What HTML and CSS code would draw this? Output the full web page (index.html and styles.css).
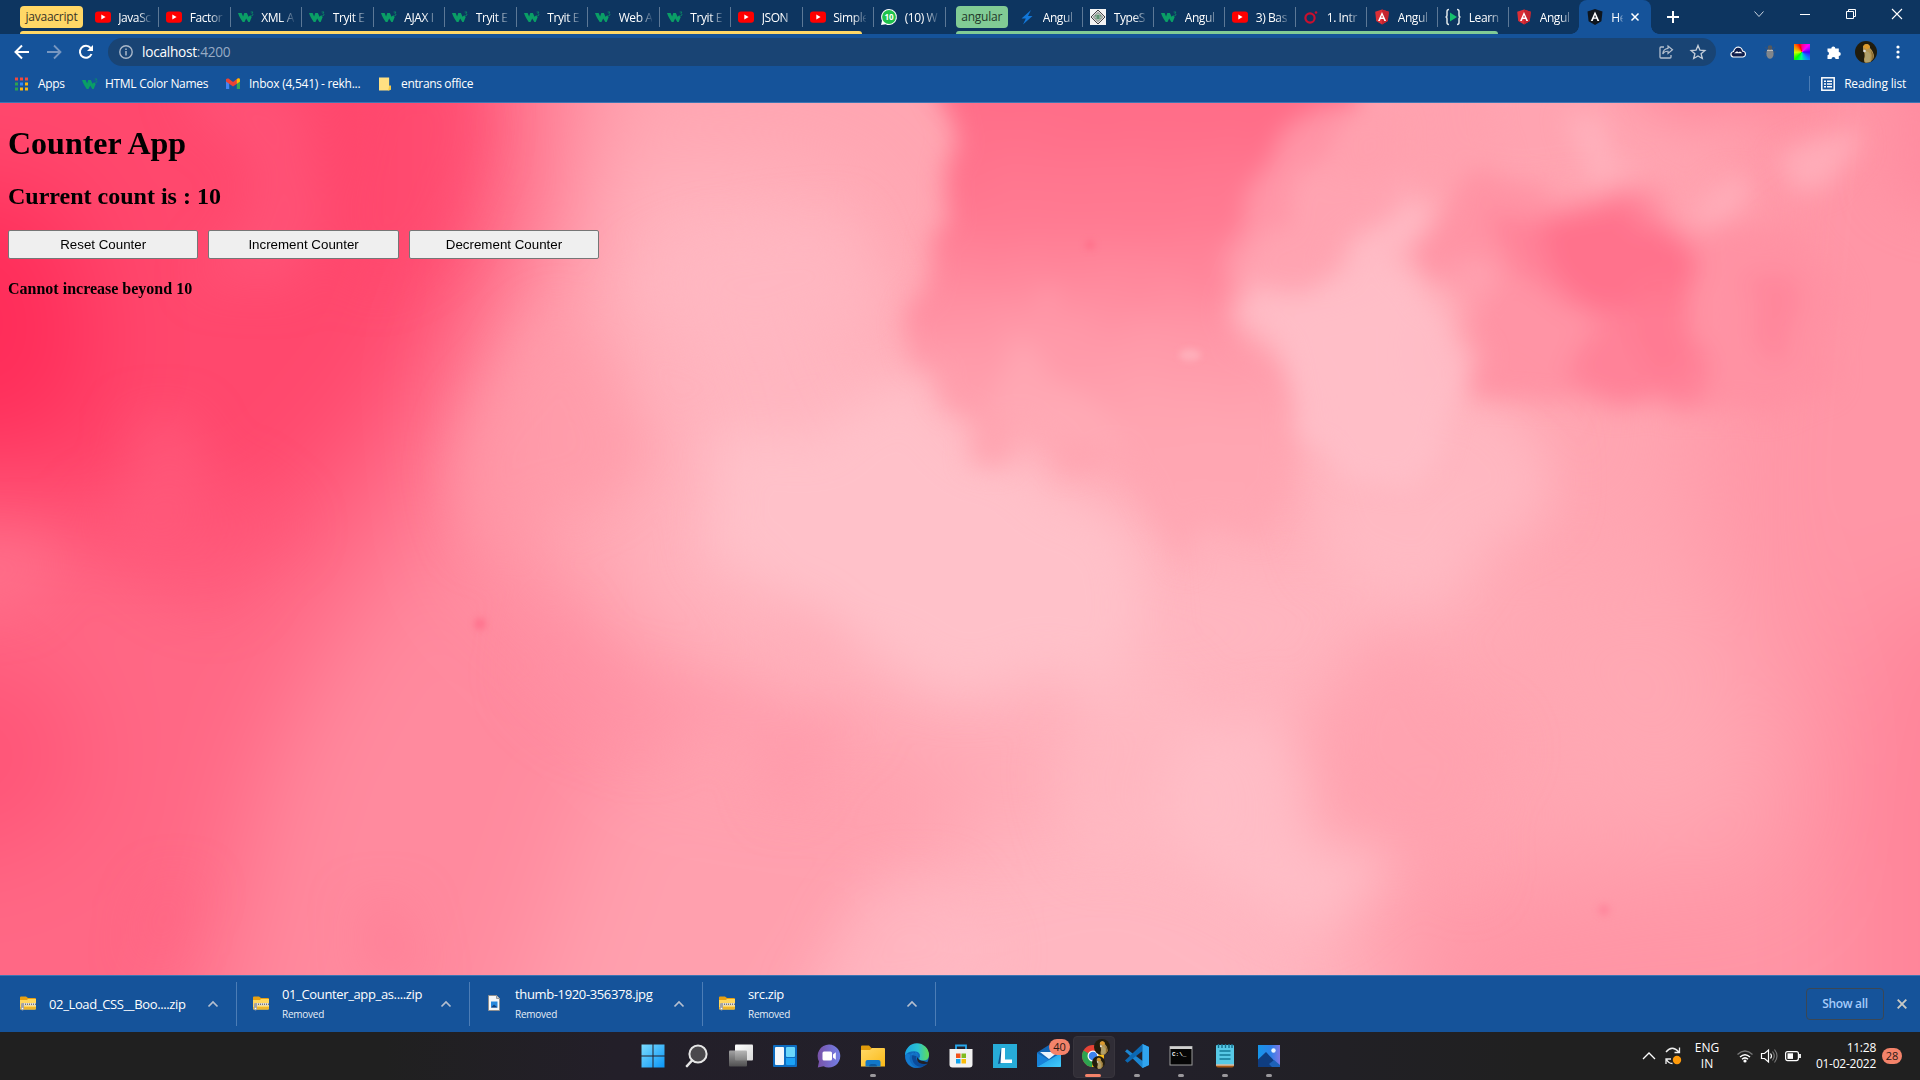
FILE: index.html
```html
<!DOCTYPE html>
<html lang="en">
<head>
<meta charset="utf-8">
<title>HelloWorld</title>
<link rel="stylesheet" href="styles.css">
</head>
<body>
<svg class="defs" width="0" height="0" aria-hidden="true">
  <defs>
    <symbol id="yt" viewBox="0 0 16 16"><rect x="0" y="2.5" width="16" height="11.3" rx="3" fill="#f00"/><path d="M6.3 5.6v5l4.3-2.5z" fill="#fff"/></symbol>
    <symbol id="w3" viewBox="0 0 16 16"><path d="M0 4h3.600l1.500 3.600L6.300 4h2.600l1.600 3.800 1.500-1.300 1.700 1.500-2 5h-1.400L8.200 9.500 6.500 13H4.700C3 10.500 1.200 8 0 4z" fill="#0a9e66"/><path d="M12.600 3h2.400l-1.200 1.500c1.600.2 1.500 2.300-.2 2.300-.6 0-1-.2-1.200-.5" fill="none" stroke="#0a8f66" stroke-width=".8"/></symbol>
    <symbol id="ng" viewBox="0 0 16 16"><path d="M8 .5l6.800 2.300-1 9.200L8 15.500 2.200 12l-1-9.200z" fill="#dd2f36"/><path d="M8 .5l6.800 2.300-1 9.200L8 15.500z" fill="#c4252f"/><path d="M8 3L4 12h1.800l.8-2h2.900l.8 2h1.800zm0 3.200l1 2.400H7z" fill="#fff"/></symbol>
    <symbol id="ngdark" viewBox="0 0 16 16"><path d="M8 0l7.500 2.600-1.100 9.600L8 16l-6.400-3.800L.5 2.600z" fill="#0e151d"/><path d="M8 2.600L3.800 12h1.900l.9-2.200h2.900l.9 2.200h1.900zm0 3.300l1.100 2.500H7z" fill="#fff"/></symbol>
    <symbol id="zip" viewBox="0 0 16 16"><path d="M0 2.500Q0 1.500 1 1.500h5l2 1.500h7q1 0 1 1v4H0z" fill="#e8a010"/><path d="M0 5h7l1-1h8v9.500q0 1-1 1H1q-1 0-1-1z" fill="#ffd75e"/><path d="M0 12h16v1.500q0 1-1 1H1q-1 0-1-1z" fill="#eeb52b"/><rect x="2" y="8" width="14" height="2.600" fill="#ddd"/><path d="M3 9.300h13" stroke="#777" stroke-width="1.500" stroke-dasharray="1 1"/><rect x="1" y="8" width="3" height="7.500" rx="1.400" fill="#a4a4a4"/><circle cx="2.500" cy="13.500" r=".8" fill="#fff"/></symbol>
    <symbol id="caret" viewBox="0 0 12 12"><path d="M1.500 8.500L6 4l4.500 4.500" fill="none" stroke="#b5bfcf" stroke-width="1.700"/></symbol>
    <symbol id="bird" viewBox="0 0 22 22"><circle cx="11" cy="11" r="11" fill="#211c0c"/><path d="M8 5.500Q9 2.500 12 3q3 .5 3 4 4 4 4 9l-3.500 5q-4 1.500-6 .3-1-2.300 0-5.300.5-4-1.500-7z" fill="#b39450"/><path d="M8 6q.8-3 4-3 2.800.5 3 3.500L12 8.500z" fill="#dd9a2c"/><path d="M10 10q4 0 5.500 4l-1 7-4 .3q-1.500-4 0-7z" fill="#b0a06c"/><path d="M15.500 9q3.500 4 3.300 8l-2.300 3q1-6-1-11z" fill="#8a6c33"/><circle cx="9.500" cy="10" r="1.300" fill="#ddd"/></symbol>
    <linearGradient id="gBlue" x2="1" y2="1"><stop stop-color="#7bdcff"/><stop offset="1" stop-color="#0a95f5"/></linearGradient>
    <linearGradient id="gWhite" x2="1" y2="1"><stop stop-color="#fff"/><stop offset="1" stop-color="#d8d8d8"/></linearGradient>
    <linearGradient id="gGrey" x2="0" y2="1"><stop stop-color="#b0b0b0"/><stop offset="1" stop-color="#555"/></linearGradient>
    <linearGradient id="gChat" x2="1" y2="0"><stop stop-color="#7952a8"/><stop offset="1" stop-color="#7381e8"/></linearGradient>
    <linearGradient id="gFold" x2="1" y2="1"><stop stop-color="#ffd968"/><stop offset="1" stop-color="#fbb917"/></linearGradient>
    <linearGradient id="gEdge" x2="1" y2="0"><stop stop-color="#1aa4e4"/><stop offset=".55" stop-color="#2bc3d2"/><stop offset="1" stop-color="#62dd51"/></linearGradient>
    <linearGradient id="gMail" x2="1" y2="1"><stop stop-color="#168be0"/><stop offset="1" stop-color="#43cdfb"/></linearGradient>
    <linearGradient id="gPhoto" x2="1" y2="0"><stop stop-color="#1595e9"/><stop offset=".6" stop-color="#2f80e8"/><stop offset="1" stop-color="#8078e4"/></linearGradient>
  </defs>
</svg>

<header class="tabstrip">
  <div class="group group-yellow">
    <div class="chip">javaacript</div>
    <div class="tab"><svg><use href="#yt"/></svg><span>JavaSc</span></div>
    <div class="tab"><svg><use href="#yt"/></svg><span>Factor</span></div>
    <div class="tab"><svg><use href="#w3"/></svg><span>XML A</span></div>
    <div class="tab"><svg><use href="#w3"/></svg><span>Tryit E</span></div>
    <div class="tab"><svg><use href="#w3"/></svg><span>AJAX I</span></div>
    <div class="tab"><svg><use href="#w3"/></svg><span>Tryit E</span></div>
    <div class="tab"><svg><use href="#w3"/></svg><span>Tryit E</span></div>
    <div class="tab"><svg><use href="#w3"/></svg><span>Web A</span></div>
    <div class="tab"><svg><use href="#w3"/></svg><span>Tryit E</span></div>
    <div class="tab"><svg><use href="#yt"/></svg><span>JSON</span></div>
    <div class="tab last"><svg><use href="#yt"/></svg><span>Simple</span></div>
  </div>
  <div class="tab"><svg viewBox="0 0 16 16"><path d="M8 0a8 8 0 1 1-3.500 15.200L0 16l1-4.300A8 8 0 0 1 8 0z" fill="#fff"/><circle cx="8" cy="8" r="6.900" fill="#1fc24c"/><text x="8" y="11.200" text-anchor="middle" class="wa-count">10</text></svg><span>(10) W</span></div>
  <div class="group group-green">
    <div class="chip">angular</div>
    <div class="tab"><svg viewBox="0 0 16 16"><path d="M12 1L2.500 9.500h4.300L4 15.500 13.500 7H9z" fill="#1277d8"/></svg><span>Angul</span></div>
    <div class="tab"><svg viewBox="0 0 16 16"><rect width="16" height="16" fill="#f4f4f4"/><path d="M8 1l7 7-7 7-7-7z" fill="#ddd" stroke="#444" stroke-width="1"/><path d="M8 3.500L12.500 8 8 12.500 3.500 8z" fill="#cfe0d2" stroke="#777"/><path d="M5 7h6M5.500 9h5M8 5.500v5" stroke="#3c7a55"/></svg><span>TypeS</span></div>
    <div class="tab"><svg><use href="#w3"/></svg><span>Angul</span></div>
    <div class="tab"><svg><use href="#yt"/></svg><span>3) Bas</span></div>
    <div class="tab"><svg viewBox="0 0 16 16"><circle cx="7" cy="9" r="4.600" fill="none" stroke="#c8102e" stroke-width="2.200"/><circle cx="13" cy="3.500" r="1.300" fill="#c8102e"/></svg><span>1. Intr</span></div>
    <div class="tab"><svg><use href="#ng"/></svg><span>Angul</span></div>
    <div class="tab last"><svg viewBox="0 0 16 16"><path d="M4 .5Q2 .5 2 2.500v3.500Q2 8 .5 8 2 8 2 10v3.500q0 2 2 2M12 .5q2 0 2 2v3.500q0 2 1.500 2-1.500 0-1.500 2v3.500q0 2-2 2" fill="none" stroke="#dfe7ea" stroke-width="1.500"/><path d="M5 3.500v9L12 8z" fill="#14bf6d"/></svg><span>Learn</span></div>
  </div>
  <div class="tab plain"><svg><use href="#ng"/></svg><span>Angul</span></div>
  <div class="tab active"><svg><use href="#ngdark"/></svg><span>He</span><svg class="tab-x" viewBox="0 0 8 8"><path d="M.5.5l7 7M7.500.5l-7 7" stroke="#fff" stroke-width="1.500"/></svg></div>
  <svg class="plus" viewBox="0 0 12 12"><path d="M6 0v12M0 6h12" stroke="#fff" stroke-width="2"/></svg>
  <div class="winctl">
    <svg viewBox="0 0 12 12"><path d="M1.500 3.500L6 8.500l4.500-5" fill="none" stroke="#cbd5e0"/></svg>
    <svg viewBox="0 0 12 12"><path d="M1 6.500h10" stroke="#fff"/></svg>
    <svg viewBox="0 0 12 12"><path d="M1.500 3.500h7v7h-7zM3.500 3.500v-2h7v7h-2" fill="none" stroke="#fff"/></svg>
    <svg viewBox="0 0 12 12"><path d="M1 1l10 10M11 1L1 11" stroke="#fff" stroke-width="1.100"/></svg>
  </div>
</header>

<nav class="toolbar">
  <svg class="nav" viewBox="0 0 16 16"><path d="M15 8H2M8 1.500L1.500 8 8 14.500" fill="none" stroke="#fff" stroke-width="2"/></svg>
  <svg class="nav" viewBox="0 0 16 16"><path d="M1 8h13M8 1.500L14.500 8 8 14.500" fill="none" stroke="#7897c0" stroke-width="1.800"/></svg>
  <svg class="nav" viewBox="0 0 16 16"><path d="M13.500 10A6 6 0 1 1 12.600 4" fill="none" stroke="#fff" stroke-width="2"/><path d="M15 1v6H9z" fill="#fff"/></svg>
  <div class="omnibox">
    <svg class="info" viewBox="0 0 14 14"><circle cx="7" cy="7" r="6.200" fill="none" stroke="#aab8c9" stroke-width="1.400"/><path d="M7 6v4.500M7 3.500v1.400" stroke="#aab8c9" stroke-width="1.500"/></svg>
    <span class="url">localhost<span class="port">:4200</span></span>
    <svg class="share" viewBox="0 0 14 14"><path d="M5 2H2Q1 2 1 3v9q0 1 1 1h9q1 0 1-1v-2" fill="none" stroke="#b3bfce" stroke-width="1.300"/><path d="M9 1l4.500 3.700L9 8.500V6.300Q5.500 6 3.800 9 4 4 9 3.300z" fill="none" stroke="#b3bfce" stroke-width="1.200"/></svg>
    <svg class="star" viewBox="0 0 16 16"><path d="M8 1.500l1.900 4.600 5 .4-3.800 3.200 1.200 4.800L8 11.900l-4.300 2.600 1.200-4.800L1.100 6.500l5-.4z" fill="none" stroke="#c5ced9" stroke-width="1.300"/></svg>
  </div>
  <div class="exts">
    <svg viewBox="0 0 16 16"><path d="M3 13q-2.500-1-2-3.500Q1.500 8 3.500 7.500 5 3 8.500 3q3.500.5 4 4 3 .5 3 3T13 13z" fill="#0d1c4c" stroke="#fff" stroke-width="1.100"/><path d="M4 9.300l3-2 1.500 1L10 7.500l2.500 1.800z" fill="#fff"/></svg>
    <svg viewBox="0 0 16 16"><path d="M3 3l3 3M13 3l-3 3M2 8h12M3 13l3-3M13 13l-3-3" stroke="#35527b"/><ellipse cx="8" cy="9.500" rx="3.600" ry="5.300" fill="#81868b"/><circle cx="8" cy="3.500" r="2.300" fill="#55595e"/><path d="M5 6.500h6" stroke="#bbb"/></svg>
    <i class="rainbow"></i>
    <svg viewBox="0 0 16 16"><path d="M1.500 4.500h3.800a2 2 0 1 1 4 0h3.500v3.600a2 2 0 1 1 0 4V15H9.500a2 2 0 0 0-4 0h-4v-3.700a1.900 1.900 0 0 0 0-3.700z" fill="#fff"/></svg>
    <svg class="avatar"><use href="#bird"/></svg>
    <svg viewBox="0 0 16 16"><circle cx="8" cy="3" r="1.600" fill="#fff"/><circle cx="8" cy="8" r="1.600" fill="#fff"/><circle cx="8" cy="13" r="1.600" fill="#fff"/></svg>
  </div>
</nav>

<nav class="bookmarks">
  <svg class="apps" viewBox="0 0 13 14"><path d="M0 2h3M5 2h3M10 2h3" stroke="#f04a3e" stroke-width="3"/><path d="M0 7h3" stroke="#2ea24f" stroke-width="3"/><path d="M5 7h3" stroke="#3387f5" stroke-width="3"/><path d="M10 7h3M5 12h3M10 12h3" stroke="#fbb80f" stroke-width="3"/><path d="M0 12h3" stroke="#2ea24f" stroke-width="3"/></svg><span class="bm b1">Apps</span>
  <svg><use href="#w3"/></svg><span class="bm b2">HTML Color Names</span>
  <svg class="gmail" viewBox="0 0 14 11"><path d="M0 1.500V11h3.200V4.500z" fill="#4285f4"/><path d="M14 1.500V11h-3.200V4.500z" fill="#34a853"/><path d="M0 1.300Q1 0 2.500.6L7 4l4.500-3.400Q13 0 14 1.300v2.200L7 8.500 0 3.500z" fill="#ea4335"/><path d="M10.800 1.200Q13.500-.8 14 1.800v1.700l-3.200 2.300z" fill="#fbbc04"/></svg><span class="bm b3">Inbox (4,541) - rekh...</span>
  <svg class="folder" viewBox="0 0 13 14"><path d="M0 0h11v9h2v4h-2v1H0z" fill="#ffe082"/><path d="M11 9l-1 5h1l2-1V9z" fill="#f6c945"/></svg><span class="bm b4">entrans office</span>
  <div class="reading"><svg viewBox="0 0 14 14"><rect x=".8" y=".8" width="12.400" height="12.400" fill="none" stroke="#fff" stroke-width="1.500"/><path d="M3 4.200h2M3 7h2M3 9.800h2M6 4.200h5M6 7h5M6 9.800h5" stroke="#fff" stroke-width="1.500"/></svg><span class="bm">Reading list</span></div>
</nav>

<main class="page">
  <svg class="sky" viewBox="0 0 1920 872" preserveAspectRatio="none" aria-hidden="true">
    <defs>
      <filter id="haze" x="-30%" y="-30%" width="160%" height="160%" color-interpolation-filters="sRGB"><feGaussianBlur stdDeviation="52"/></filter>
      <filter id="soft" filterUnits="userSpaceOnUse" x="-100" y="-100" width="2120" height="1072" color-interpolation-filters="sRGB"><feTurbulence type="fractalNoise" baseFrequency=".009" numOctaves="3" seed="4"/><feDisplacementMap in="SourceGraphic" scale="90" xChannelSelector="R" yChannelSelector="G"/><feGaussianBlur stdDeviation="24"/></filter>
      <filter id="wisp" filterUnits="userSpaceOnUse" x="-100" y="-100" width="2120" height="1072" color-interpolation-filters="sRGB"><feTurbulence type="fractalNoise" baseFrequency=".016" numOctaves="3" seed="9"/><feDisplacementMap in="SourceGraphic" scale="46" xChannelSelector="R" yChannelSelector="G"/><feGaussianBlur stdDeviation="12"/></filter>
      <filter id="spot" x="-50%" y="-50%" width="200%" height="200%" color-interpolation-filters="sRGB"><feGaussianBlur stdDeviation="3"/></filter>
      <linearGradient id="topcloud" gradientUnits="userSpaceOnUse" x1="0" y1="0" x2="0" y2="430"><stop stop-color="#ff6d88"/><stop offset=".3" stop-color="#ff7c93"/><stop offset=".55" stop-color="#ff98a8"/><stop offset=".75" stop-color="#ffa5b1"/><stop offset="1" stop-color="#ffa8b4"/></linearGradient>
    </defs>
    <rect width="1920" height="872" fill="#ffa6b2"/>
    <g filter="url(#haze)">
      <path d="M-160-160H600L570 130 480 260 500 440 700 640 900 700 940 1030H-160z" fill="#ff8a9e"/>
      <path d="M-160-160H540V120L480 260 430 400 330 540 270 660 180 1030H-160z" fill="#ff6885"/>
      <path d="M-160-160H460V120L430 240 350 350 260 440 120 440-160 380z" fill="#ff486d"/>
      <path d="M-160 90H60L100 260 60 340-160 350z" fill="#ff2c59"/>
      <path d="M-160 560H50L90 680 20 750-160 750z" fill="#ff5477"/>
      <path d="M620 620L960 670 960 750 800 1030H480z" fill="#ffa0ae"/>
      <path d="M600 60L850 80 900 250 960 330 1130 400 1300 440 1480 380 1500 480 1260 640 1130 640 1000 640 740 560 600 470 680 370 620 230z" fill="#ffb6c0"/>
      <path d="M1750-160H2080V1030H1700L1780 650 1700 400z" fill="#ff96a6"/>
      <path d="M1880 500H2080V1030H1800z" fill="#ff8499"/>
      <path d="M1450 500L1700 450 1760 650 1650 760 1560 650z" fill="#ffa8b3"/>
      <path d="M900 800L1020 700 1180 700 1350 800 1340 1030H760z" fill="#ffb7c1"/>
      <path d="M1400 800L1620 770 1850 760 1850 1030H1440z" fill="#ff95a5"/>
    </g>
    <g filter="url(#soft)">
      <path d="M180-40L280-40 320 100 280 190 200 170 240 110z" fill="#ff6284" opacity=".4"/>
      <path d="M130 300L180 290 200 370 150 440z" fill="#ff6a88" opacity=".4"/>
      <path d="M90 400L230 370 300 440 240 500 130 480z" fill="#ff5577" opacity=".4"/>
      <path d="M380-40L480-40 460 120 400 200 330 140z" fill="#ff486d" opacity=".5"/>
      <path d="M-60 420L30 420 50 500-60 540z" fill="#ff7d94" opacity=".35"/>
      <path d="M500 220L560 210 600 250 640 340 580 400 490 440 470 350z" fill="#ff97a7" opacity=".6"/>
      <path d="M650 130L850 120 890 160 870 220 760 250 650 210z" fill="#ffb8c1" opacity=".6"/>
      <path d="M720 350L900 290 980 350 1120 400 1160 500 1100 600 950 580 820 530 720 450z" fill="#ffc2ca" opacity=".9"/>
      <path d="M1090 540L1180 560 1200 640 1240 720 1200 780 1090 740 1050 660z" fill="#ffbcc5" opacity=".6"/>
      <path d="M1170 610L1280 580 1290 680 1330 740 1370 800 1320 820 1200 780 1150 700z" fill="#ffc0c9" opacity=".8"/>
      <path d="M1250 210L1330 200 1390 120 1430 140 1440 220 1470 300 1560 350 1500 440 1400 500 1310 450 1300 300z" fill="#ffbdc6" opacity=".7"/>
      <path d="M1360 540L1440 560 1500 650 1480 770 1400 760 1330 690 1330 610z" fill="#ffa0ad" opacity=".5"/>
      <path d="M500 500L620 560 750 610 860 620 800 680 560 620z" fill="#ff92a4" opacity=".4"/>
      <path d="M760 480L860 540 820 570 750 510z" fill="#ffaab6" opacity=".6"/>
      <path d="M880 770L940 760 1000 840 980 920H800z" fill="#ffbcc5" opacity=".5"/>
      <path d="M1400-60H1800L1760 60 1690 110 1400 80z" fill="#ffa4b0" opacity=".7"/>
      <path d="M1620-60L1840-60 1780 30 1680 40z" fill="#ff8499" opacity=".8"/>
      <path d="M1900-60H1980V90H1890z" fill="#ff8ca0"/>
      <path d="M340 800L400 790 370 820 420 870H340z" fill="#ff708b" opacity=".4"/>
      <path d="M150 790L200 780 180 840 130 850z" fill="#ff5f7f" opacity=".4"/>
    </g>
    <g filter="url(#wisp)">
      <path d="M938-60H1380L1320 50 1290 120 1220 185 1240 240 1280 270 1297 340 1285 380 1265 430 1220 425 1195 420 1185 460 1155 440 1145 380 1115 345 1090 375 1060 370 1035 340 1010 310 995 365 980 365 975 305 945 290 925 260 912 215 935 150 950 95z" fill="url(#topcloud)"/>
      <path d="M1240 110L1290 10 1400 10 1400 90 1340 160 1310 192 1265 188 1222 200 1220 150z" fill="#ffa3b0" opacity=".7"/>
      <path d="M1360-60L1470-60 1510 80 1440 90 1400 70 1330 80z" fill="#ffa0ad" opacity=".6"/>
      <path d="M1405 133L1455 118 1475 60 1530 90 1590 90 1650 90 1680 130 1720 110 1780 130 1830 150 1850 190 1830 290 1780 310 1690 305 1650 305 1580 295 1530 290 1490 290 1472 275 1490 240 1460 195 1425 160z" fill="#ff90a2" opacity=".85"/>
      <path d="M1490 110L1530 130 1560 110 1610 95 1670 120 1700 165 1680 210 1710 260 1705 298 1640 295 1560 270 1600 220 1540 190 1510 160z" fill="#ff7e95" opacity=".8"/>
      <path d="M1530 130L1590 108 1660 125 1690 160 1680 205 1610 205 1550 175z" fill="#ff6e8a" opacity=".85"/>
      <path d="M1640 180L1690 180 1695 250 1670 290 1630 240z" fill="#ff7990" opacity=".7"/>
      <path d="M1750 175L1790 165 1800 210 1780 260 1755 240z" fill="#ff7f96" opacity=".6"/>
      <path d="M1690 125L1720 60 1745 75 1730 110 1705 130zM1770 75L1810 40 1860 15 1870 50 1800 95z" fill="#ffacb8"/>
      <path d="M1560 20L1600 10 1630 70 1600 80z" fill="#ffb4bf" opacity=".75"/>
      <path d="M1485 200L1495 170 1475 155 1445 150 1465 190 1485 225z" fill="#ffa8b4" opacity=".8"/>
      <path d="M1045 190L1060 180 1050 215 1035 225zM1000 310L1010 240 1060 270 1110 300 1130 350 1080 340 1050 350z" fill="#ffafba" opacity=".5"/>
      <path d="M1228 215L1255 185 1305 190 1350 165 1385 110 1400 165 1430 200 1475 245 1465 300 1420 380 1340 380 1300 330 1285 250z" fill="#ffc0c9" opacity=".75"/>
      <path d="M1375 130L1390 90 1425 105 1445 100 1410 125 1400 150z" fill="#ffb9c3"/>
    </g>
    <g filter="url(#spot)">
      <circle cx="480" cy="521" r="6" fill="#ff6d8a" opacity=".8"/>
      <circle cx="1090" cy="142" r="5" fill="#ff6883" opacity=".6"/>
      <circle cx="1604" cy="807" r="6" fill="#ff859b" opacity=".8"/>
      <ellipse cx="1190" cy="252" rx="11" ry="6" fill="#ffb4be" opacity=".8"/>
    </g>
  </svg>
  <div class="content">
    <h1>Counter App</h1>
    <h2>Current count is : 10</h2>
    <div class="buttons">
      <button>Reset Counter</button>
      <button>Increment Counter</button>
      <button>Decrement Counter</button>
    </div>
    <h4>Cannot increase beyond 10</h4>
  </div>
</main>

<section class="downloads">
  <div class="dl"><svg class="ficon"><use href="#zip"/></svg><div class="name"><p>02_Load_CSS__Boo....zip</p></div><svg class="car"><use href="#caret"/></svg></div>
  <div class="dl"><svg class="ficon"><use href="#zip"/></svg><div class="name"><p>01_Counter_app_as....zip</p><small>Removed</small></div><svg class="car"><use href="#caret"/></svg></div>
  <div class="dl"><svg class="ficon" viewBox="0 0 16 16"><path d="M2.500.5h8l3 3v12h-11z" fill="#f6f6f6" stroke="#8f8f8f"/><path d="M10.500.5v3h3" fill="#ccc" stroke="#999"/><rect x="5" y="6.500" width="6.500" height="6" fill="#2788dd"/><path d="M5 12.500l3-3 3.500 3z" fill="#123f7c"/></svg><div class="name"><p>thumb-1920-356378.jpg</p><small>Removed</small></div><svg class="car"><use href="#caret"/></svg></div>
  <div class="dl"><svg class="ficon"><use href="#zip"/></svg><div class="name"><p>src.zip</p><small>Removed</small></div><svg class="car"><use href="#caret"/></svg></div>
  <div class="showall">Show all</div>
  <svg class="dlx" viewBox="0 0 10 10"><path d="M.7.7l8.600 8.600M9.300.7L.7 9.300" stroke="#c9c9c4" stroke-width="1.900"/></svg>
</section>

<footer class="taskbar">
  <div class="apps-row">
    <div class="app"><svg viewBox="0 0 24 24"><path d="M.5.5h11v11H.5zM12.500.5h11v11h-11zM.5 12.500h11v11H.5zM12.500 12.500h11v11h-11z" fill="url(#gBlue)"/></svg></div>
    <div class="app"><svg viewBox="0 0 24 24"><circle cx="13" cy="10" r="8.600" fill="#4a484c" stroke="#e6e6e6" stroke-width="2"/><path d="M7 16.500L2 22" stroke="#e6e6e6" stroke-width="2.600" stroke-linecap="round"/></svg></div>
    <div class="app"><svg viewBox="0 0 24 24"><rect x="6" y=".5" width="18" height="16" rx="1" fill="url(#gWhite)"/><rect x="0" y="6.500" width="18" height="16" rx="1" fill="url(#gGrey)" opacity=".9"/></svg></div>
    <div class="app"><svg viewBox="0 0 24 24"><rect y="1" width="24" height="22" rx="1" fill="#0d6cc0"/><rect x="2" y="3" width="9" height="18" rx="1" fill="#f3f7fb"/><rect x="13" y="3" width="9" height="10" rx="1" fill="#6ad7fb"/><path d="M13 14h9v6q0 1-1 1h-7q-1 0-1-1z" fill="#1ba2f5"/></svg></div>
    <div class="app"><svg viewBox="0 0 24 24"><path d="M12 .5A11.500 11.500 0 1 1 6.500 22.200L.8 23.500 2 17.500A11.500 11.500 0 0 1 12 .5z" fill="url(#gChat)"/><rect x="5.500" y="7.500" width="9.500" height="9" rx="1.500" fill="#fff"/><path d="M16 10.500l2.800-2.200v7.400L16 13.500z" fill="#fff"/></svg></div>
    <div class="app run"><svg viewBox="0 0 24 24"><path d="M0 2.500Q0 1.500 1 1.500h7l3 3h5v5H0z" fill="#e19b0b"/><path d="M0 6h9l2-2h12q1 0 1 1v17.500H0z" fill="url(#gFold)"/><path d="M4.500 22.500V18q0-2 2-2h11q2 0 2 2v4.500z" fill="#1178c9"/><path d="M8 22.500q0-2.500 2-2.500h4q2 0 2 2.500z" fill="#0c5a9e"/></svg></div>
    <div class="app"><svg viewBox="0 0 24 24"><circle cx="12" cy="12" r="12" fill="#1169bd"/><path d="M0 11.500A12 12 0 0 1 24 11q0 5.500-6 5.500-4 0-4-2.500 1.500-1 .8-3.500Q13.500 7.300 9 7.300 3 7.300 0 11.500z" fill="url(#gEdge)"/><path d="M9.500 8Q5 12 8.500 18.500q4 5.500 9.500 4Q24 20 22 18q-4.500 2-8.500 0-4-3-1.500-7z" fill="#0b4a98"/><path d="M12.500 12.500q1-3.500-2-4.300Q3 9 5 17q2 5 7 7Q4 24 1 16.500-.5 12 1.500 9.500" fill="#1581d6" opacity=".7"/><path d="M24 19q-5 2-9.500 0-3.500-2.500-2-6 1 4 6 4z" fill="#232026"/></svg></div>
    <div class="app"><svg viewBox="0 0 24 24"><path d="M7 6V1.500h10V6" fill="none" stroke="#27a8ec" stroke-width="1.800"/><path d="M.5 5h23v15.500q0 3-3 3h-17q-3 0-3-3z" fill="#f1f1f1"/><path d="M7 9.500h4.500V14H7z" fill="#f1511b"/><path d="M12.500 9.500H17V14h-4.500z" fill="#80bb20"/><path d="M7 15h4.500v4.500H7z" fill="#10a3ed"/><path d="M12.500 15H17v4.500h-4.500z" fill="#fbbc09"/></svg></div>
    <div class="app"><svg viewBox="0 0 24 24"><rect width="24" height="24" fill="#27acd8"/><path d="M8.500 4v15L5 20 8 4z" fill="#10508a"/><path d="M8.500 4h3.500v11.500h7V19H7.500z" fill="#fff"/></svg></div>
    <div class="app"><svg viewBox="0 0 24 24"><path d="M0 8.500L12 1l12 7.500V22q0 1-1 1H1q-1 0-1-1z" fill="#1265b4"/><path d="M3 8h18L12 15z" fill="#eaf4fc"/><path d="M0 9l12 7L0 23z" fill="#1782d8"/><path d="M24 9v13q0 1-1 1H0z" fill="url(#gMail)"/></svg><span class="badge">40</span></div>
    <div class="app run current"><svg viewBox="0 0 24 24"><circle cx="12" cy="12" r="11" fill="#e74335"/><path d="M12 12L2.500 6.500A11 11 0 0 0 11 23l5-8z" fill="#2da450"/><path d="M12 12l10.100-4.300A11 11 0 0 1 11 23z" fill="#fbc116"/><circle cx="12" cy="12" r="5.500" fill="#fff"/><circle cx="12" cy="12" r="4.300" fill="#3d82ee"/></svg><svg class="face big" viewBox="0 0 22 22"><use href="#bird" width="22" height="22"/></svg><svg class="face small" viewBox="0 0 22 22"><use href="#bird" width="22" height="22"/></svg></div>
    <div class="app run"><svg viewBox="0 0 24 24"><path d="M17.500 0L24 3v18l-6.500 3L2 9l-2-1.500 2-2.200L17.500 17z" fill="#1c86d1"/><path d="M0 16.500L17.500 0v7L2.500 18.700z" fill="#0b68b3"/><path d="M17.500 0L24 3v18l-6.500 3z" fill="#30a5f0"/></svg></div>
    <div class="app run"><svg viewBox="0 0 24 24"><rect x="1" y="2.500" width="22" height="18.500" fill="#050505" stroke="#9b9b9b"/><rect x="1" y="2.500" width="22" height="2.500" fill="#d0d0d0"/><text x="3" y="11.500" class="cmd-text">C:\_</text></svg></div>
    <div class="app run"><svg viewBox="0 0 24 24"><rect x="3" y="1" width="18" height="21" rx="1" fill="#57c9e6"/><path d="M5.500 0v4M9 0v4M12.500 0v4M16 0v4M19 0v4" stroke="#14708e" stroke-width="1.400"/><path d="M6.500 7h11M6.500 11h11M6.500 15h11" stroke="#137a98" stroke-width="1.500"/><path d="M3 20.500h18v1q0 2-2 2H5q-2 0-2-2z" fill="#a95813"/><path d="M3 20.500h18v1H3z" fill="#eee"/></svg></div>
    <div class="app run"><svg viewBox="0 0 24 24"><rect x="1" y="1" width="22" height="22" fill="url(#gPhoto)"/><path d="M1 15.500L9 8l14 15H1z" fill="#0f3d80"/><path d="M12 20l5-4 6 5v2h-8z" fill="#1d62b8"/><circle cx="16.500" cy="6.500" r="2.200" fill="#e9f5fd"/></svg></div>
  </div>
  <div class="tray">
    <svg class="ti" viewBox="0 0 24 24"><path d="M6 15l6-6 6 6" fill="none" stroke="#fff" stroke-width="1.300"/></svg>
    <svg class="ti" viewBox="0 0 24 24"><path d="M5 8Q11 .5 18 8M18.500 3.500v5h-5M5 20v-5h5M5.500 15.500q2 4 6 4" fill="none" stroke="#eee" stroke-width="1.300"/><circle cx="16" cy="16" r="4.200" fill="#ff9a0a"/></svg>
    <div class="lang">ENG<br>IN</div>
    <svg class="ti" viewBox="0 0 24 24"><path d="M4.500 10.500q7.500-7 15 0" fill="none" stroke="#777" stroke-width="1.400"/><path d="M7 13q5-4.600 10 0M9 15.300q3-2.800 6 0" fill="none" stroke="#fff" stroke-width="1.500"/><circle cx="12" cy="17" r="1.600" fill="#fff"/></svg>
    <svg class="ti" viewBox="0 0 24 24"><path d="M4.500 9.500h3l4-3.500v12l-4-3.500h-3z" fill="none" stroke="#fff" stroke-width="1.200"/><path d="M13.500 9.500q2 2.500 0 5" fill="none" stroke="#fff" stroke-width="1.200"/><path d="M15.500 7.500q3.500 4.500 0 9M17.500 5.500q5 6.500 0 13" fill="none" stroke="#777" stroke-width="1.200"/></svg>
    <svg class="ti" viewBox="0 0 24 24"><rect x="4.600" y="7.600" width="12.800" height="9" rx="2" fill="none" stroke="#fff" stroke-width="1.200"/><rect x="6.500" y="9.300" width="5.500" height="5.600" fill="#fff"/><path d="M19 10v4" stroke="#fff" stroke-width="1.800"/></svg>
    <div class="clock">11:28<br>01-02-2022</div>
    <div class="notif">28</div>
  </div>
</footer>
</body>
</html>
```
FILE: styles.css
```css
* { box-sizing: border-box; }
body {
  margin: 0;
  width: 1920px;
  height: 1080px;
  overflow: hidden;
  display: flex;
  flex-direction: column;
  font-family: "Open Sans", "Noto Sans", sans-serif;
  font-size: 12px;
  color: #fff;
}
svg { display: block; flex: none; overflow: visible; }
.defs { position: absolute; }

/* Tab strip */
.tabstrip { height: 34px; flex: none; background: #0d3560; display: flex; padding-left: 20px; }
.group { display: flex; position: relative; height: 34px; }
.group::after {
  content: ""; position: absolute; left: 0; right: 12px; bottom: 0; height: 3px;
  border-radius: 3px 3px 0 0; background: #ffd766;
}
.group-green::after { background: #81cb95; }
.chip {
  width: 63px; height: 22px; margin: 6px 4.700px 0 0; border-radius: 4px;
  background: #ffd766; color: #3a3426; text-align: center; line-height: 21px;
  letter-spacing: -.25px;
}
.group-green { margin-left: 10px; }
.group-green::after { right: 11px; }
.group-green .chip { width: 52px; background: #81cb95; color: #22382a; margin-right: 4.500px; }
.tab {
  width: 71.500px; height: 20px; margin-top: 7px; padding-left: 7px;
  border-right: 1px solid #5c7896; display: flex; align-items: center; gap: 7.500px;
}
.group-green .tab { width: 71px; }
.tab.plain { width: 70px; }
.tab svg { width: 16px; height: 16px; }
.tab span {
  width: 33px; overflow: hidden; white-space: nowrap; line-height: 19px; letter-spacing: -.4px;
  -webkit-mask-image: linear-gradient(90deg, #000 60%, transparent 105%);
  mask-image: linear-gradient(90deg, #000 60%, transparent 105%);
}
.wa-count { font: bold 8px "Open Sans", sans-serif; fill: #fff; }
.tab.plain { border-right: 0; }
.tab.active {
  position: relative; width: 72px; height: 34px; margin-top: 0; border: 0;
  border-radius: 8px 8px 0 0; background: #15539a; padding: 0 0 6px 8px; gap: 8px;
}
.tab.active::before, .tab.active::after {
  content: ""; position: absolute; bottom: 0; width: 8px; height: 8px;
}
.tab.active::before { left: -8px; background: radial-gradient(circle at 0 0, transparent 7.500px, #15539a 8px); }
.tab.active::after { right: -8px; background: radial-gradient(circle at 100% 0, transparent 7.500px, #15539a 8px); }
.tab.active span { width: 12px; }
.tab.active > svg, .tab.active > span { position: relative; top: 3px; }
.tab .tab-x { width: 8px; height: 8px; }
.plus { width: 12px; height: 12px; margin: 11px 0 0 16px; }
.winctl { margin: 8px 17px 0 auto; display: flex; gap: 34px; }
.winctl svg { width: 12px; height: 12px; }

/* Toolbar */
.toolbar { height: 36px; flex: none; background: #15539a; display: flex; align-items: center; padding: 0 0 0 14px; }
.nav { width: 16px; height: 16px; margin-right: 16px; }
.omnibox {
  width: 1608px; height: 28px; margin: 0 14px 0 -2px; border-radius: 14px; background: #194474;
  display: flex; align-items: center; padding: 0 10px 0 11px; font-size: 14px;
}
.info { width: 14px; height: 14px; }
.url { margin-left: 9px; line-height: 26px; font-size: 13.700px; letter-spacing: -.28px; }
.port { color: #97abc4; }
.share { width: 14px; height: 14px; margin-left: auto; }
.star { width: 16px; height: 16px; margin-left: 17px; }
.exts { display: flex; align-items: center; gap: 16px; }
.exts svg, .rainbow { width: 16px; height: 16px; }
.rainbow { background: conic-gradient(#f08 0, #f0f 12%, #40f 25%, #09f 40%, #0f8 52%, #0f0 62%, #cf0 74%, #ff8000 86%, #f00 95%, #f08); }
.exts .avatar { width: 22px; height: 22px; margin: 0 -3px; }

/* Bookmarks */
.bookmarks {
  height: 33px; flex: none; background: #15539a; border-bottom: 1px solid #3d75b3;
  display: flex; align-items: center; padding: 0 14px 5px 15px;
}
.bookmarks svg { width: 16px; height: 16px; }
.bookmarks .apps { width: 13px; height: 14px; }
.bm { line-height: 18px; white-space: nowrap; letter-spacing: -.3px; }
.b1 { width: 44px; margin-left: 10px; }
.b2 { width: 121px; margin-left: 7px; }
.bookmarks .gmail { width: 14px; height: 11px; }
.b3 { width: 130px; margin-left: 9px; letter-spacing: -.25px; }
.bookmarks .folder { width: 12px; height: 14px; }
.b4 { margin-left: 10px; letter-spacing: -.35px; }
.reading { margin-left: auto; display: flex; align-items: center; gap: 9px; border-left: 1px solid #4a7cb5; height: 15px; padding-left: 11px; }
.reading .bm { letter-spacing: -.2px; }
.reading svg { width: 14px; height: 14px; }

/* Page */
.page { flex: 1; position: relative; overflow: hidden; background: #ffa6b2; color: #000; font-family: "Liberation Serif", serif; }
.sky { position: absolute; inset: 0; width: 100%; height: 100%; }
.content { position: relative; padding: 0 8px; }
.content h1 { margin: 0; padding-top: 22px; font-size: 32px; line-height: 37px; }
.content h2 { margin: 20px 0 20px; font-size: 24px; line-height: 28px; }
.content h4 { margin: 21px 0; font-size: 16px; line-height: 18px; }
.buttons { display: flex; gap: 10px; }
.buttons button {
  width: 190.400px; height: 29px; padding: 0; border: 1px solid #767676; border-radius: 2px;
  background: #efefef; color: #000; font: 13.333px "Liberation Sans", sans-serif;
}

/* Downloads */
.downloads { height: 57px; flex: none; background: #15539a; border-top: 1px solid #3d75b3; display: flex; align-items: center; padding-left: 4px; }
.dl { width: 233px; height: 44px; border-right: 1px solid #4c7db6; display: flex; align-items: center; padding-left: 16px; }
.ficon { width: 16px; height: 16px; margin-top: -3px; }
.name { margin-left: 13px; width: 158px; }
.name p { margin: 0; font-size: 13px; line-height: 20px; letter-spacing: -.36px; white-space: nowrap; }
.name small { display: block; font-size: 10px; line-height: 20px; color: #e6eef7; letter-spacing: -.25px; font-weight: 500; }
.car { width: 12px; height: 12px; }
.showall {
  width: 78px; height: 32px; margin: 0 13px 0 auto; border: 1px solid #3a4755; border-radius: 4px;
  text-align: center; line-height: 29px; color: #a5cbfa; font-weight: 600; letter-spacing: -.35px;
}
.dlx { width: 10px; height: 10px; margin-right: 13px; }

/* Taskbar */
.taskbar { height: 48px; flex: none; background: linear-gradient(90deg, #202020, #202020 20%, #231f29 32%, #22202a 60%, #202020 80%); display: flex; padding-left: 631px; }
.apps-row { display: flex; }
.app { position: relative; width: 44px; height: 48px; display: flex; align-items: center; justify-content: center; }
.app > svg { width: 24px; height: 24px; }
.run::after { content: ""; position: absolute; left: 19px; bottom: 3px; width: 6px; height: 3px; border-radius: 2px; background: #9a989c; }
.current::before { content: ""; position: absolute; left: 2px; top: 4px; width: 40px; height: 40px; border-radius: 4px; background: #302d36; border: 1px solid #38353d; }
.current > svg { position: relative; }
.current::after { left: 14px; width: 16px; background: #f4836a; }
.app > .face { position: absolute; }
.app > .face.big { width: 16px; height: 16px; left: 23px; top: 7px; }
.app > .face.small { width: 13px; height: 13px; left: 21px; top: 24px; }
.badge { position: absolute; left: 22px; top: 7px; width: 21px; height: 16px; border-radius: 8px; background: #f4836a; color: #2b1713; text-align: center; line-height: 15px; font-size: 11px; }
.cmd-text { font: bold 6px "Liberation Mono", monospace; fill: #fff; }
.tray { margin-left: auto; display: flex; align-items: center; padding-right: 18px; }
.ti { width: 24px; height: 24px; }
.lang { width: 44px; margin-right: 4px; text-align: center; line-height: 16px; }
.clock { width: 71px; text-align: right; line-height: 16px; letter-spacing: -.25px; white-space: nowrap; }
.notif { width: 20px; height: 16px; margin-left: 6px; border-radius: 8px; background: #f4836a; color: #2b1713; text-align: center; line-height: 15px; font-size: 11px; }
```
